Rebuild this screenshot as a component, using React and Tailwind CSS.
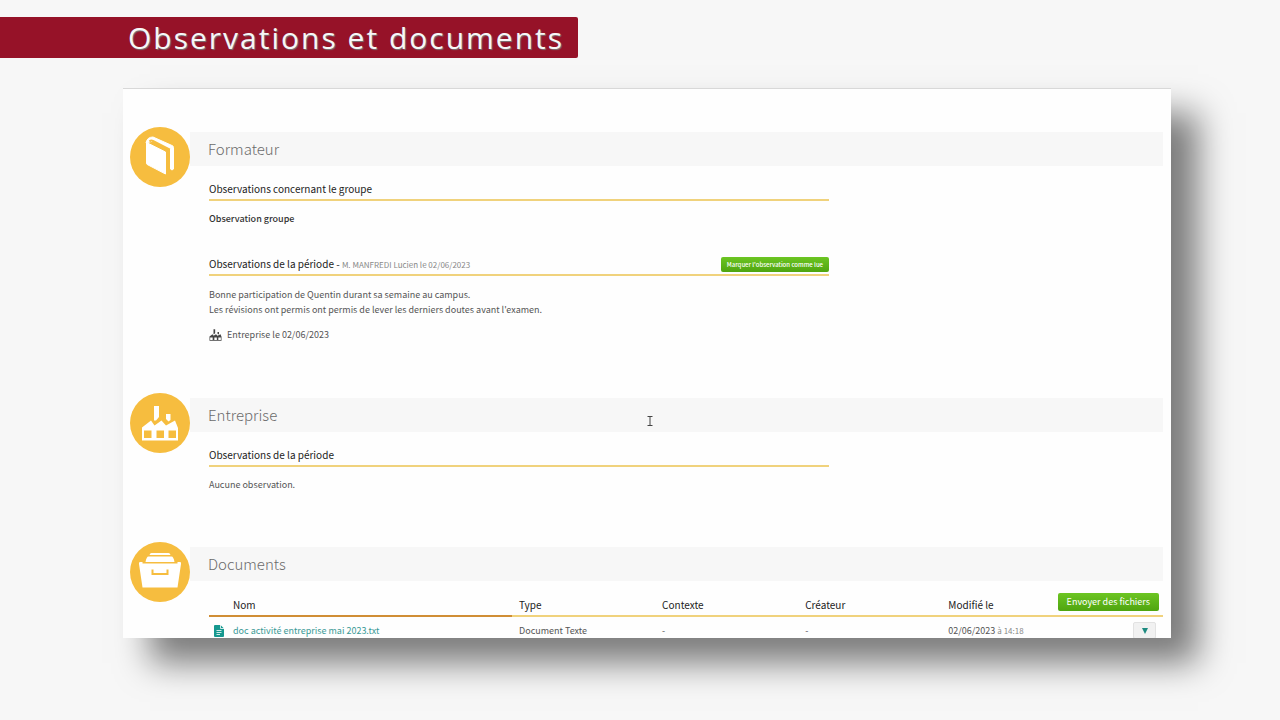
import React from 'react';

const documents = [
  { name: 'doc activité entreprise mai 2023.txt', type: 'Document Texte', context: '-', author: '-', date: '02/06/2023', time: '14:18' },
];

const BookIcon = () => (
  <svg viewBox="0 0 60 60" className="w-full h-full" aria-hidden="true">
    <path d="M16 16Q17 10 23 10L42 18.500q1.500.5 1.500 2V42q-1.500 2-3 0V21.500L23 14Z" fill="#fff" stroke="#fff" strokeLinejoin="round" />
    <path d="M19.500 14.500q1.500-1.500 3.500-.5L38.800 22V45" fill="none" stroke="#f6bd3f" strokeWidth="2" />
    <path d="M16.500 15.500 35.500 25v22L17.200 37.500q-.7-.5-.7-1.500Z" fill="#fff" stroke="#fff" strokeLinejoin="round" />
  </svg>
);

const FactoryIcon = ({ className }) => (
  <svg viewBox="11 10 38 36" className={className} fill="currentColor" aria-hidden="true">
    <path d="M24 11h5v11l-3 3.500h-2Z" />
    <path d="M36 19h4.500v6l-2 1.500L36 24Z" />
    <path
      fillRule="evenodd"
      d="M12 32.500 21 25.500 24.500 30.500 31.500 25.500 36 30.500 45 25.500 48 33V45.500H12ZM14 35.500V43H21.500V35.500ZM26.500 35.500V43H34V35.500ZM38.500 35.500V43H46V35.500Z"
    />
  </svg>
);

const DrawerIcon = () => (
  <svg viewBox="0 0 60 60" className="w-full h-full" fill="#fff" aria-hidden="true">
    <path d="M21.500 11h17q1.500 0 2 2h-21q.5-2 2-2Z" />
    <path d="M18.500 14.500h23q2 0 3 5.500h-29q1-5.500 3-5.500Z" />
    <path d="M10 20h2.500v1.500h35V20H50q1.500 0 1 2L47.500 45.500h-35L9 22q-.3-2 1-2Z" />
    <path d="M22.500 27.500v4.500h15v-4.500" fill="none" stroke="#f6bd3f" strokeWidth="2" />
  </svg>
);

const FileIcon = () => (
  <svg viewBox="0 0 10 12" className="w-[10px] h-3" aria-hidden="true">
    <path d="M1 0h5.500L10 3.500V11q0 1-1 1H1q-1 0-1-1V1q0-1 1-1Z" fill="#16988f" />
    <path d="M6.500 0v3.500H10" fill="none" stroke="#fff" strokeWidth=".8" />
    <path d="M2.500 5.500h5M2.500 7.500h5M2.500 9.500h3.500" stroke="#fff" strokeWidth=".8" />
  </svg>
);

const Section = ({ title, icon, className = '', children }) => (
  <section className={`flex pl-[7px] pr-2 ${className}`}>
    <div className="w-[60px] h-[60px] shrink-0 rounded-full bg-[#f6bd3f] text-white flex items-center justify-center">{icon}</div>
    <div className="flex-1 min-w-0 pt-[5px]">
      <h2 className="h-[34px] pl-[18px] bg-[#f7f7f7] text-[15px] leading-[33px] font-light text-[#6b6b6b]">{title}</h2>
      <div className="pl-[19px]">{children}</div>
    </div>
  </section>
);

const SubHeading = ({ children, className = '' }) => (
  <div className={`max-w-[620px] flex items-center justify-between h-[21px] pb-px border-b-2 border-[#f0d27c] ${className}`}>
    {children}
  </div>
);

const App = () => {
  return (
    <div className="h-screen flex flex-col overflow-hidden bg-[#f7f7f7] font-['Noto_Sans_CJK_SC',sans-serif]">
      <header className="mt-[17px] h-[41px] shrink-0 self-start bg-[#961228] rounded-r-xs pl-32 pr-[14px]">
        <h1 className="font-['Open_Sans',sans-serif] text-[30px] leading-[41px] tracking-[2px] text-[#f7f7f7] [text-shadow:1px_1px_1px_#777]">
          Observations et documents
        </h1>
      </header>

      <main className="relative flex-1 min-h-0 mt-[30px] mb-[82px] ml-[123px] mr-[109px] bg-[#fefefe] border-t border-[#d8d8d8] shadow-[27px_25px_32px_rgba(0,0,0,0.5)]">
        <div className="h-full overflow-hidden pt-[38px]">
          <Section title="Formateur" icon={<BookIcon />}>
            <SubHeading className="mt-[14px]">
              <h3 className="text-[10px] leading-[18px] text-[#222]">Observations concernant le groupe</h3>
            </SubHeading>
            <p className="mt-[10px] text-[9px] leading-[15px] font-medium text-[#333]">Observation groupe</p>

            <SubHeading className="mt-[29px]">
              <h3 className="text-[10px] leading-[18px] text-[#222]">
                Observations de la période - <span className="text-[8px] text-[#888]">M. MANFREDI Lucien le 02/06/2023</span>
              </h3>
              <button
                type="button"
                className="h-[15px] px-[6px] rounded-xs bg-linear-to-b from-[#6cc522] to-[#4fa50f] text-[6px] leading-[15px] font-medium text-white whitespace-nowrap"
              >
                Marquer l'observation comme lue
              </button>
            </SubHeading>
            <p className="mt-[11px] text-[9px] leading-[15px] text-[#555]">
              Bonne participation de Quentin durant sa semaine au campus.
              <br />
              Les révisions ont permis ont permis de lever les derniers doutes avant l'examen.
            </p>
            <p className="mt-[10px] flex items-center gap-[5px] text-[9px] leading-[15px] text-[#555]">
              <FactoryIcon className="w-[13px] h-3 text-[#444]" />
              Entreprise le 02/06/2023
            </p>
          </Section>

          <Section title="Entreprise" className="mt-[51px]" icon={<FactoryIcon className="w-[38px] h-9" />}>
            <SubHeading className="mt-[14px]">
              <h3 className="text-[10px] leading-[18px] text-[#222]">Observations de la période</h3>
            </SubHeading>
            <p className="mt-[10px] text-[9px] leading-[15px] text-[#555]">Aucune observation.</p>
          </Section>

          <Section title="Documents" className="mt-[50px]" icon={<DrawerIcon />}>
            <table className="mt-3 w-full table-fixed border-collapse text-left text-[9px] leading-[15px] text-[#555]">
              <thead>
                <tr className="text-[10px] text-[#222]">
                  <th className="w-[303px] h-[23px] p-0 pl-6 font-normal border-b-2 border-[#d08e35]">Nom</th>
                  <th className="w-[15%] p-0 pl-[7px] font-normal border-b-2 border-[#f0d27c]">Type</th>
                  <th className="w-[15%] p-0 pl-[7px] font-normal border-b-2 border-[#f0d27c]">Contexte</th>
                  <th className="w-[15%] p-0 pl-[7px] font-normal border-b-2 border-[#f0d27c]">Créateur</th>
                  <th className="p-0 pl-[7px] pr-1 font-normal border-b-2 border-[#f0d27c]">
                    <div className="flex items-center justify-between">
                      Modifié le
                      <button
                        type="button"
                        className="h-[18px] px-[9px] mb-1 rounded-xs bg-linear-to-b from-[#6cc522] to-[#4fa50f] text-[9px] leading-[18px] text-white whitespace-nowrap"
                      >
                        Envoyer des fichiers
                      </button>
                    </div>
                  </th>
                </tr>
              </thead>
              <tbody>
                {documents.map((doc) => (
                  <tr key={doc.name} className="h-7">
                    <td className="p-0 pl-[5px]">
                      <a href="#" className="flex items-center gap-[9px] text-[#3a9a96]">
                        <FileIcon />
                        {doc.name}
                      </a>
                    </td>
                    <td className="p-0 pl-[7px]">{doc.type}</td>
                    <td className="p-0 pl-[7px]">{doc.context}</td>
                    <td className="p-0 pl-[7px]">{doc.author}</td>
                    <td className="p-0 pl-[7px] pr-[7px]">
                      <div className="flex items-center justify-between">
                        <span>
                          {doc.date} <span className="text-[8px] text-[#888]">à {doc.time}</span>
                        </span>
                        <button
                          type="button"
                          aria-label="Actions"
                          className="w-[23px] h-[17px] flex items-center justify-center rounded-xs border border-[#e2e2e2] bg-[#f1f1f1]"
                        >
                          <svg viewBox="0 0 6 6" className="w-[6px] h-[6px]" aria-hidden="true">
                            <path d="M0 0h6L3 6Z" fill="#1d8a80" />
                          </svg>
                        </button>
                      </div>
                    </td>
                  </tr>
                ))}
              </tbody>
            </table>
          </Section>
        </div>

        {/* Text cursor */}
        <svg viewBox="0 0 6 10" className="absolute left-1/2 top-[327px] w-[6px] h-[10px]" fill="none" stroke="#444" aria-hidden="true">
          <path d="M.5.500h5M3 .500v9M.5 9.500h5" />
        </svg>
      </main>
    </div>
  );
};

export default App;
